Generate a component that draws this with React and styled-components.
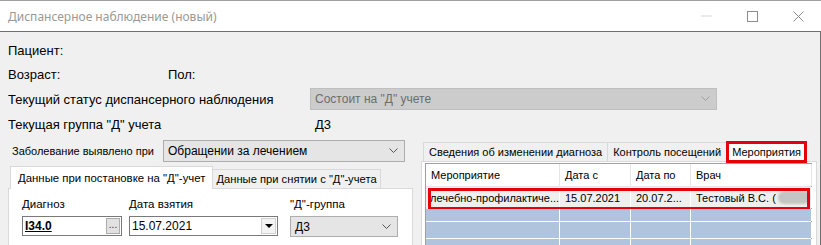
import React from 'react';
import styled, { createGlobalStyle } from 'styled-components';

const GlobalStyle = createGlobalStyle`
  html, body {
    margin: 0;
    padding: 0;
    background: #f0f0f0;
  }
  * {
    box-sizing: border-box;
  }
`

const Window = styled.div`
  width: 821px;
  height: 245px;
  overflow: hidden;
  display: flex;
  flex-direction: column;
  border-top: 1px solid #a0a0a0;
  font-family: "Liberation Sans", Arial, sans-serif;
  color: #000;
`
const TitleBar = styled.div`
  height: 31px;
  flex: none;
  display: flex;
  align-items: center;
  background: #fff;
  border-bottom: 1px solid #6f6f6f;
  padding-left: 8px;
  font-family: "Noto Sans", "Open Sans", sans-serif;
  font-size: 12px;
  color: #999;
`
const Controls = styled.div`
  margin-left: auto;
  display: flex;
  height: 100%;
`
const CtrlButton = styled.div`
  width: 46px;
  height: 100%;
  display: flex;
  align-items: center;
  justify-content: center;
`
const Body = styled.div`
  flex: 1;
  display: flex;
  flex-direction: column;
  background: #f0f0f0;
  border-right: 1px solid #6f6f6f;
  padding: 6px 3px 0 8px;
`
const InfoRow = styled.div`
  height: 24px;
  margin-top: ${(p) => p.$mt || 0}px;
  display: flex;
  align-items: center;
  font-size: 13px;
  flex: none;
`
const Label = styled.span`
  width: ${(p) => (p.$w ? p.$w + 'px' : 'auto')};
  flex: none;
  white-space: nowrap;
`
const Combo = styled.div`
  width: ${(p) => p.$w}px;
  height: ${(p) => p.$h || 22}px;
  display: flex;
  align-items: center;
  padding: 0 6px 0 4px;
  font-size: 12px;
  background: ${(p) => (p.$disabled ? '#cccccc' : '#e5e5e5')};
  border: 1px solid ${(p) => (p.$disabled ? '#bfbfbf' : '#adadad')};
  color: ${(p) => (p.$disabled ? '#6d6d6d' : '#000')};
  span {
    flex: 1;
    white-space: nowrap;
  }
`
const Lower = styled.div`
  flex: 1;
  display: grid;
  grid-template-columns: 405px 396px;
  column-gap: 8px;
  min-height: 0;
`
const LeftCol = styled.div`
  display: flex;
  flex-direction: column;
  padding-top: 4px;
`
const DetectRow = styled.div`
  display: flex;
  align-items: center;
  height: 22px;
  font-size: 11px;
  padding-left: 4px;
`
const TabStrip = styled.div`
  display: flex;
  align-items: flex-end;
  padding-left: 2px;
  margin-top: ${(p) => p.$mt || 0}px;
  position: relative;
  z-index: 1;
`
const Tab = styled.div`
  height: ${(p) => (p.$active ? 23 : 20)}px;
  padding: 0 ${(p) => p.$px || 6}px;
  display: flex;
  align-items: center;
  font-size: ${(p) => p.$fs || 11.4}px;
  white-space: nowrap;
  background: ${(p) => (p.$active ? '#fff' : '#f0f0f0')};
  border: 1px solid #d9d9d9;
  border-bottom: ${(p) => (p.$active ? 'none' : '1px solid #d9d9d9')};
  margin-left: ${(p) => (p.$first ? 0 : -1)}px;
`
const MarkedTab = styled(Tab)`
  height: 22px;
  border: 3px solid #e6000a;
  padding: 0 3px;
  margin-bottom: -1px;
`
const Panel = styled.div`
  flex: 1;
  background: #fff;
  border: 1px solid #d9d9d9;
  margin-top: -1px;
  padding: ${(p) => p.$pad || '0'};
`
const Fields = styled.div`
  display: flex;
  align-items: flex-start;
`
const Field = styled.div`
  width: ${(p) => p.$w}px;
  margin-left: ${(p) => p.$ml || 0}px;
  display: flex;
  flex-direction: column;
  font-size: 11.5px;
`
const FieldLabel = styled.div`
  height: 14px;
  line-height: 14px;
  margin-bottom: 5px;
`
const TextBox = styled.div`
  height: 20px;
  border: 1px solid #7a7a7a;
  background: #fff;
  display: flex;
  align-items: center;
  padding: 0 1px 0 2px;
  font-size: 12px;
  b {
    text-decoration: underline;
    flex: 1;
  }
  span {
    flex: 1;
  }
`
const SmallButton = styled.div`
  width: 14px;
  height: 16px;
  background: #e1e1e1;
  border: 1px solid #adadad;
  font-size: 10px;
  line-height: 12px;
  text-align: center;
  color: #333;
`
const DropButton = styled.div`
  width: 15px;
  height: 16px;
  background: #f3f3f3;
  border: 1px solid #d0d0d0;
  display: flex;
  align-items: center;
  justify-content: center;
`
const RightCol = styled.div`
  display: flex;
  flex-direction: column;
  padding-top: 5px;
`
const Grid = styled.div`
  height: 100%;
  display: flex;
  flex-direction: column;
  border-left: 1px solid #a0a0a0;
  border-right: 1px solid #a0a0a0;
  border-top: 1px solid #a0a0a0;
  background: #b0c4de;
`
const GridRow = styled.div`
  display: grid;
  grid-template-columns: 134px 71px 60px 121px;
  height: ${(p) => p.$h}px;
  flex: none;
  position: relative;
  background: ${(p) => p.$bg};
  border-bottom: 1px solid ${(p) => p.$line || '#fff'};
`
const Cell = styled.div`
  font-size: 11px;
  display: flex;
  align-items: center;
  padding-left: ${(p) => p.$pl || 5}px;
  white-space: nowrap;
  overflow: hidden;
  border-right: 1px solid ${(p) => p.$line || '#fff'};
`
const RowMark = styled.div`
  position: absolute;
  left: 2px;
  right: 1px;
  top: 1px;
  bottom: -2px;
  border: 3px solid #e6000a;
  pointer-events: none;
`
const Blur = styled.span`
  display: inline-block;
  width: 32px;
  height: 13px;
  margin-left: 2px;
  border-radius: 6px;
  background: #c4c4c4;
  filter: blur(1.2px);
`

const Chevron = ({ color = '#555' }) => (
  <svg width="9" height="6" viewBox="0 0 9 6">
    <polyline points="0.5,0.5 4.5,4.5 8.5,0.5" fill="none" stroke={color} strokeWidth="1" />
  </svg>
);

function App() {
  return (
    <Window>
      <GlobalStyle />
      <TitleBar>
        Диспансерное наблюдение (новый)
        <Controls>
          <CtrlButton>
            <svg width="11" height="2" viewBox="0 0 11 2">
              <line x1="0" y1="1" x2="11" y2="1" stroke="#d6d6d6" strokeWidth="1" />
            </svg>
          </CtrlButton>
          <CtrlButton>
            <svg width="11" height="11" viewBox="0 0 11 11">
              <rect x="0.5" y="0.5" width="10" height="10" fill="none" stroke="#8c8c8c" strokeWidth="1" />
            </svg>
          </CtrlButton>
          <CtrlButton>
            <svg width="11" height="11" viewBox="0 0 11 11">
              <path d="M0.5 0.5 L10.5 10.5 M10.5 0.5 L0.5 10.5" stroke="#8c8c8c" strokeWidth="1" />
            </svg>
          </CtrlButton>
        </Controls>
      </TitleBar>
      <Body>
        <InfoRow>
          <Label>Пациент:</Label>
        </InfoRow>
        <InfoRow>
          <Label $w={160}>Возраст:</Label>
          <Label>Пол:</Label>
        </InfoRow>
        <InfoRow $mt={1}>
          <Label $w={302}>Текущий статус диспансерного наблюдения</Label>
          <Combo $w={407} $disabled>
            <span>Состоит на "Д" учете</span>
            <Chevron color="#a0a0a0" />
          </Combo>
        </InfoRow>
        <InfoRow $mt={1}>
          <Label $w={307}>Текущая группа "Д" учета</Label>
          <Label>Д3</Label>
        </InfoRow>
        <Lower>
          <LeftCol>
            <DetectRow>
              <Label $w={151}>Заболевание выявлено при</Label>
              <Combo $w={242}>
                <span>Обращении за лечением</span>
                <Chevron />
              </Combo>
            </DetectRow>
            <TabStrip $mt={4}>
              <Tab $active $first $px={7}>Данные при постановке на "Д"-учет</Tab>
              <Tab $px={3} $fs={11.2}>Данные при снятии с "Д"-учета</Tab>
            </TabStrip>
            <Panel $pad="8px 0 0 13px">
              <Fields>
                <Field $w={100}>
                  <FieldLabel>Диагноз</FieldLabel>
                  <TextBox>
                    <b>I34.0</b>
                    <SmallButton>...</SmallButton>
                  </TextBox>
                </Field>
                <Field $w={149} $ml={7}>
                  <FieldLabel>Дата взятия</FieldLabel>
                  <TextBox>
                    <span>15.07.2021</span>
                    <DropButton>
                      <svg width="8" height="4" viewBox="0 0 8 4">
                        <polygon points="0,0 8,0 4,4" fill="#000" />
                      </svg>
                    </DropButton>
                  </TextBox>
                </Field>
                <Field $w={108} $ml={12}>
                  <FieldLabel>"Д"-группа</FieldLabel>
                  <Combo $w={108} $h={21}>
                    <span>Д3</span>
                    <Chevron />
                  </Combo>
                </Field>
              </Fields>
            </Panel>
          </LeftCol>
          <RightCol>
            <TabStrip>
              <Tab $first $px={5} $fs={11}>Сведения об изменении диагноза</Tab>
              <Tab $px={5} $fs={11}>Контроль посещений</Tab>
              <MarkedTab $active $fs={11}>Мероприятия</MarkedTab>
            </TabStrip>
            <Panel $pad="1px 4px 0 3px">
              <Grid>
                <GridRow $h={23} $bg="#fff" $line="#e6e6e6">
                  <Cell $line="#e6e6e6">Мероприятие</Cell>
                  <Cell $line="#e6e6e6">Дата с</Cell>
                  <Cell $line="#e6e6e6">Дата по</Cell>
                  <Cell $line="#e6e6e6">Врач</Cell>
                </GridRow>
                <GridRow $h={22} $bg="#efefef" $line="#efefef">
                  <Cell $pl={4}>лечебно-профилактиче...</Cell>
                  <Cell>15.07.2021</Cell>
                  <Cell>20.07.2...</Cell>
                  <Cell>
                    Тестовый В.С. (<Blur />
                  </Cell>
                  <RowMark />
                </GridRow>
                <GridRow $h={13} $bg="#b0c4de">
                  <Cell /><Cell /><Cell /><Cell />
                </GridRow>
                <GridRow $h={17} $bg="#b0c4de">
                  <Cell /><Cell /><Cell /><Cell />
                </GridRow>
                <GridRow $h={17} $bg="#b0c4de">
                  <Cell /><Cell /><Cell /><Cell />
                </GridRow>
              </Grid>
            </Panel>
          </RightCol>
        </Lower>
      </Body>
    </Window>
  );
}

export default App;
